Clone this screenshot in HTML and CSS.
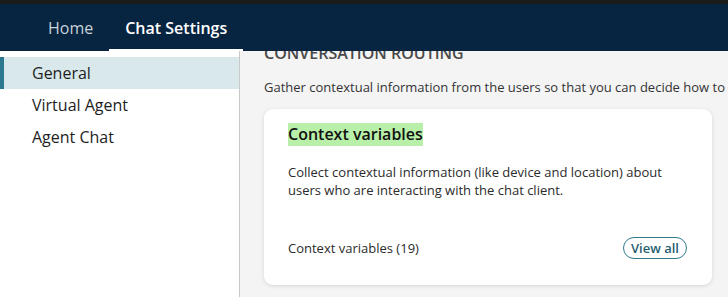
FILE: index.html
```html
<!DOCTYPE html>
<html lang="en">
<head>
  <meta charset="UTF-8" />
  <meta name="viewport" content="width=device-width, initial-scale=1.0" />
  <title>Chat Settings</title>
  <link rel="stylesheet" href="styles.css">
</head>
<body>
  <div class="topbar"></div>

  <header class="header">
    <nav class="tabs">
      <a class="tab" href="#">Home</a>
      <a class="tab active" href="#">Chat Settings</a>
    </nav>
  </header>

  <div class="layout">
    <aside class="sidebar">
      <a class="side-item active" href="#">General</a>
      <a class="side-item" href="#">Virtual Agent</a>
      <a class="side-item" href="#">Agent Chat</a>
    </aside>

    <main class="content">
      <h3 class="section-title">Conversation Routing</h3>
      <p class="section-desc">Gather contextual information from the users so that you can decide how to route the conversation.</p>

      <div class="card">
        <h4 class="card-title"><span class="highlight">Context variables</span></h4>
        <p class="card-text">Collect contextual information (like device and location) about users who are interacting with the chat client.</p>
        <div class="card-footer">
          <span>Context variables (19)</span>
          <button class="pill-btn">View all</button>
        </div>
      </div>
    </main>
  </div>
</body>
</html>
```

FILE: styles.css
```css
* {
  margin: 0;
  padding: 0;
  box-sizing: border-box;
  font-family: 'Open Sans', 'Noto Sans', sans-serif;
}

body {
  height: 100vh;
  overflow: hidden;
  display: flex;
  flex-direction: column;
  background: #f4f4f4;
  color: #222;
}

.topbar {
  height: 4px;
  background: #1b1b1b;
}

.header {
  height: 47px;
  background: #072440;
  position: relative;
  z-index: 2;
}

.tabs {
  display: flex;
  height: 100%;
  padding-left: 32px;
}

.tab {
  display: flex;
  align-items: center;
  padding: 2px 16px 0;
  color: #c9d3dc;
  text-decoration: none;
  font-size: 16px;
  white-space: nowrap;
  border-bottom: 2px solid transparent;
}

.tab.active {
  color: #fff;
  font-weight: 600;
  border-bottom-color: #fff;
}

.layout {
  flex: 1;
  display: flex;
  min-height: 0;
}

.sidebar {
  width: 240px;
  background: #fff;
  border-right: 1px solid #c8c8c8;
  padding-top: 6px;
  display: flex;
  flex-direction: column;
}

.side-item {
  display: block;
  height: 32px;
  line-height: 32px;
  color: #1e1e1e;
  text-decoration: none;
  font-size: 16px;
  border-left: 4px solid transparent;
  padding-left: 28px;
}

.side-item.active {
  background: #d8e8eb;
  border-left-color: #2b7890;
}

.content {
  flex: 1;
  padding: 0 16px 0 24px;
  overflow: hidden;
}

.section-title {
  margin-top: -9px;
  font-size: 16px;
  font-weight: 600;
  text-transform: uppercase;
  color: #4a4a4a;
  line-height: 22px;
}

.section-desc {
  margin-top: 14px;
  font-size: 13px;
  color: #333;
  white-space: nowrap;
  line-height: 18px;
}

.card {
  margin-top: 13px;
  width: 448px;
  background: #fff;
  border-radius: 9px;
  box-shadow: 0 1px 4px rgba(0, 0, 0, 0.12);
  padding: 14px 24px 26px;
}

.card-title {
  font-size: 16px;
  font-weight: 600;
  line-height: 22px;
}

.highlight {
  background: #b9f0a9;
  color: #111;
  padding-bottom: 1px;
}

.card-text {
  margin-top: 19px;
  font-size: 13px;
  line-height: 17.5px;
  color: #2b2b2b;
}

.card-footer {
  margin-top: 38px;
  display: flex;
  align-items: center;
  justify-content: space-between;
  font-size: 13px;
  color: #2b2b2b;
}

.pill-btn {
  background: #fff;
  border: 1px solid #2f7b8e;
  border-radius: 12px;
  color: #1f5d70;
  font-size: 13px;
  font-weight: 600;
  height: 22px;
  padding: 0 7px;
  margin-right: 1px;
  cursor: pointer;
}
```
